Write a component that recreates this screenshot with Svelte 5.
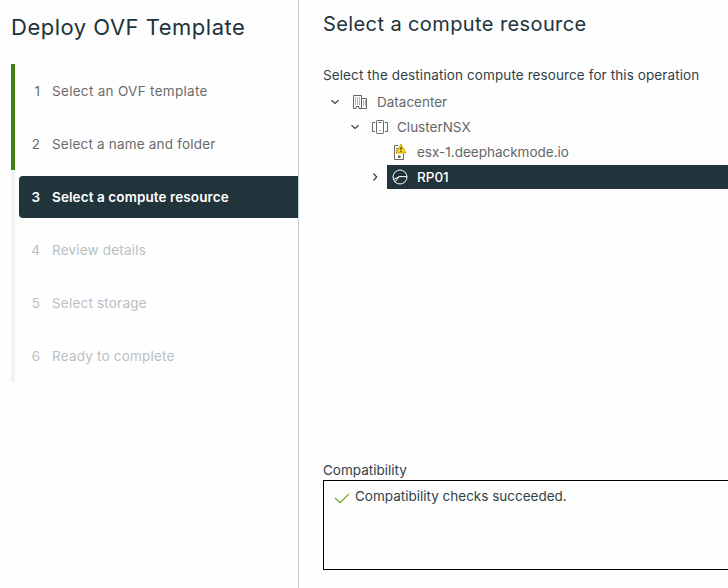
<script>
  const steps = [
    { label: 'Select an OVF template', state: 'done', ls: 0.3 },
    { label: 'Select a name and folder', state: 'done', ls: 0.2 },
    { label: 'Select a compute resource', state: 'active', ls: 0.1 },
    { label: 'Review details', state: 'todo', ls: 0.2 },
    { label: 'Select storage', state: 'todo', ls: 0.2 },
    { label: 'Ready to complete', state: 'todo', ls: 0.2 }
  ];
</script>

<div class="wizard">
  <aside>
    <h1><span>Deploy OVF Template</span></h1>
    <ol>
      {#each steps as step, i}
        <li class={step.state}>
          <div class="step">
            <span class="num">{i + 1}</span>
            <span class="name" style="letter-spacing: {step.ls}px">{step.label}</span>
          </div>
        </li>
      {/each}
    </ol>
  </aside>
  <main>
    <h2><span>Select a compute resource</span></h2>
    <p class="intro"><span>Select the destination compute resource for this operation</span></p>
    <div class="tree">
      <div class="row l0">
        <svg class="caret" width="12" height="12" viewBox="0 0 12 12"><path d="M2.5 4.2 6 7.4 9.5 4.2" /></svg>
        <div class="node">
          <svg class="icon" width="18" height="18" viewBox="0 0 18 18">
            <path d="M2.5 15.5V2.5H10.5V15.5H8M2.5 15.5H5M5 15.5V13.5H8V15.5M10.5 5.5H15.5V15.5H10.5" />
            <path class="dots" d="M4 5H9.5M4 7H9.5M4 9H9.5M4 11H9.5M12 8H15M12 10H15M12 12H15" />
          </svg>
          <span class="dc">Datacenter</span>
        </div>
      </div>
      <div class="row l1">
        <svg class="caret" width="12" height="12" viewBox="0 0 12 12"><path d="M2.5 4.2 6 7.4 9.5 4.2" /></svg>
        <div class="node">
          <svg class="icon" width="18" height="18" viewBox="0 0 18 18">
            <path d="M4 4.5H1.5V13.5H4M14 4.5H16.5V13.5H14" />
            <rect x="5.5" y="2.5" width="7" height="13" rx=".7" />
            <path d="M7.5 4.5H10.5M8.5 12.5H9.5" />
          </svg>
          <span class="cl">ClusterNSX</span>
        </div>
      </div>
      <div class="row l2">
        <span class="caret"></span>
        <div class="node">
          <svg class="icon" width="18" height="18" viewBox="0 0 18 18">
            <path d="M7 2.5H3.5V16.5H12.5V11" />
            <path d="M5 5.5H7M5 7.5H6.5" />
            <path class="fill" d="M7 12.5H9.5V15H7Z" />
            <path class="warn" d="M10 1.2 14.8 10H5.2Z" />
            <path class="bang" d="M10 4V7.2M10 8V9" />
          </svg>
          <span class="esx">esx-1.deephackmode.io</span>
        </div>
      </div>
      <div class="row l2">
        <svg class="caret" width="12" height="12" viewBox="0 0 12 12"><path d="M4.5 2.5 7.7 6 4.5 9.5" /></svg>
        <div class="node selected">
          <svg class="icon" width="18" height="18" viewBox="0 0 18 18">
            <circle cx="9" cy="9" r="7" />
            <path d="M2.5 11.5 8.3 8.6H16M8.3 8.6 4 13.8" />
          </svg>
          <span class="rp">RP01</span>
        </div>
      </div>
    </div>
    <section>
      <div class="caption"><span>Compatibility</span></div>
      <div class="box">
        <svg width="16" height="14" viewBox="0 0 16 14"><path d="M1 7 6 11.7 15 2.8" /></svg>
        <span>Compatibility checks succeeded.</span>
      </div>
    </section>
  </main>
</div>

<style>
  :global(body) { overflow: hidden; background: #fff; }
  .wizard {
    display: flex; width: 728px; height: 588px; overflow: hidden;
    background: #fefefe; color: #304249;
    font: 13.5px/20px Inter, "Liberation Sans", sans-serif;
    white-space: nowrap;
  }
  aside { box-sizing: border-box; width: 299px; flex: none; border-right: 1px solid #c5d0d4; padding-left: 11px; }
  h1, h2 { margin: 0; font-weight: 400; color: #21333b; }
  h1 { height: 64px; font-size: 22px; line-height: 55px; letter-spacing: 0.5px; }
  ol { list-style: none; margin: 0; padding: 0; }
  li { box-sizing: border-box; height: 53px; border-left: 4px solid #eef5f7; padding: 6px 0 5px 4px; }
  li.done { border-color: #42810e; color: #6b6b6b; }
  li.todo { color: #b8c0c3; }
  .step { display: flex; align-items: center; height: 42px; border-radius: 4px 0 0 4px; }
  .active .step { background: #21333b; color: #fff; font-weight: 600; }
  .num { width: 21px; text-align: right; margin-right: 12px; }
  main { flex: 1; min-width: 0; padding-left: 24px; display: flex; flex-direction: column; }
  h2 { height: 65px; flex: none; font-size: 20px; line-height: 48px; letter-spacing: 0.4px; }
  .intro { margin: 0; height: 24px; flex: none; letter-spacing: 0.1px; }
  .tree { color: #666; height: 371px; flex: none; }
  .row { display: flex; align-items: center; height: 25px; }
  .l0 { padding-left: 6px; }
  .l1 { padding-left: 26px; }
  .l2 { padding-left: 46px; }
  .caret { width: 12px; flex: none; margin-right: 6px; }
  .node { display: flex; align-items: center; flex: 1; height: 24px; padding-left: 4px; }
  .node span { margin-left: 8px; }
  .selected { background: #21333b; color: #fff; }
  .selected span { font-weight: 500; }
  svg { flex: none; display: block; fill: none; }
  .caret path { stroke: #304249; stroke-width: 1.2; }
  .icon { stroke: #666; stroke-width: 1; }
  .selected .icon { stroke: #fff; }
  .dots { stroke-dasharray: 1 1; }
  .fill { fill: #666; stroke: none; }
  .warn { fill: #ffdc0b; stroke: #c5a300; stroke-width: 1; stroke-linejoin: round; }
  .bang { stroke: #333; stroke-width: 1.2; }
  .caption { height: 20px; }
  .box { box-sizing: border-box; height: 90px; border: 1px solid #000; border-right: 0; display: flex; align-items: flex-start; padding: 5px 0 0 10px; }
  .box svg { margin: 5px 5px 0 0; stroke: #62a420; stroke-width: 1.1; }
</style>
